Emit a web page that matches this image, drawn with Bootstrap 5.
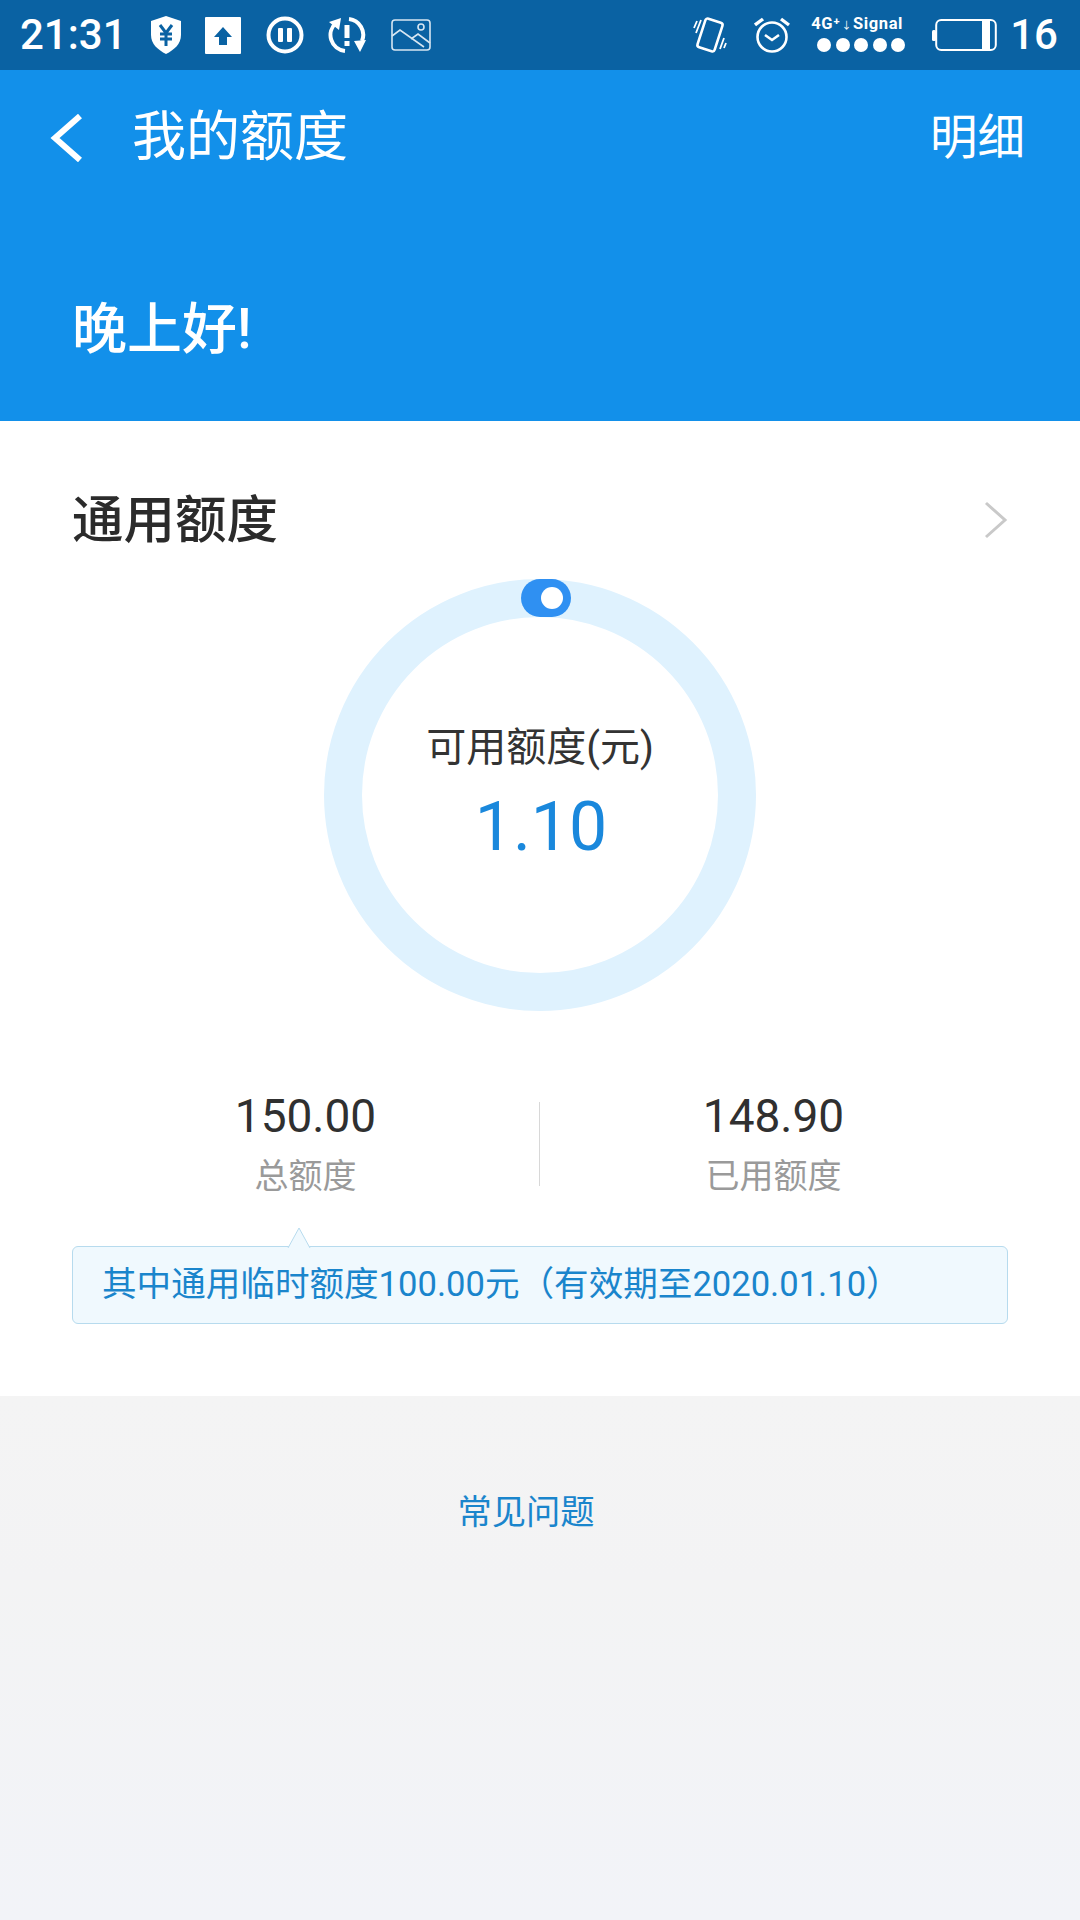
<!DOCTYPE html>
<html lang="zh">
<head>
<meta charset="UTF-8">
<meta name="viewport" content="width=device-width, initial-scale=1.0">
<title>我的额度</title>
<link href="https://cdn.jsdelivr.net/npm/bootstrap@5.3.0/dist/css/bootstrap.min.css" rel="stylesheet">
<style>
body { font-family: Roboto, "Noto Sans CJK SC", sans-serif; background: #fff; color: #303030; width: 1080px; }
.page-wrap { min-height: 1920px; }
.status-bar { height: 70px; background: #0a62a3; color: #fff; padding: 0 22px 0 20px; }
.status-time { font-size: 42px; font-weight: 500; line-height: 1; width: 129px; }
.status-num { font-size: 42px; font-weight: 500; line-height: 1; margin-left: 13px; }
.signal-box { width: 96px; margin: -2px 25px 0 21px; }
.signal-text { font-size: 16.5px; font-weight: 700; line-height: 16px; letter-spacing: .6px; white-space: nowrap; }
.signal-text small { font-size: 10px; font-weight: 400; margin: 0 1px; }
.signal-dots { gap: 4.5px; margin: 4px 0 0 6px; }
.signal-dots span { width: 14px; height: 14px; background: #fff; border-radius: 50%; }
.head-blue { height: 351px; background: #1290ea; color: #fff; }
.top-row { height: 135px; padding: 0 55px 0 50px; }
.top-title { font-size: 54px; margin-left: 50px; line-height: 1; }
.top-link { font-size: 47.5px; line-height: 1; padding-top: 3px; }
.greet { font-size: 55px; font-weight: 500; padding: 94px 0 0 72px; line-height: 1.1; }
.quota-card { height: 975px; padding: 0 72px; }
.quota-head { padding-top: 74px; height: 158px; }
.quota-title { font-size: 51.5px; font-weight: 500; line-height: 1; color: #2b2b2b; }
.quota-arrow { margin-top: 6px; }
.ring-box { width: 432px; height: 432px; border: 38px solid #dff2fe; border-radius: 50%; margin: 0 auto; }
.ring-knob { position: absolute; top: -38px; left: 159px; width: 50px; height: 38px; background: #2f90f2; border-radius: 19px; }
.ring-knob::after { content: ""; position: absolute; left: 20px; top: 8px; width: 22px; height: 22px; border-radius: 50%; background: #fff; }
.ring-label { font-size: 40px; line-height: 1; color: #333; margin-top: -2px; }
.ring-value { font-size: 68px; line-height: 1; color: #1a88dc; margin-top: 25px; padding-left: 2px; }
.stats-row { margin-top: 87px; height: 90px; }
.stats-cell { width: 467px; }
.stats-gap { width: 1px; height: 84px; background: #d8d8d8; margin-top: 2px; }
.stats-num { font-size: 46px; line-height: 1; color: #303030; }
.stats-label { font-size: 34px; line-height: 1; color: #9a9a9a; margin-top: 20px; }
.tip-box { height: 78px; margin-top: 58px; background: #f0f9fe; border: 1px solid #b7dbee; border-radius: 6px; padding-left: 29px; color: #1a85cc; font-size: 34.6px; white-space: nowrap; }
.tip-arrow { position: absolute; left: 214px; top: -20px; display: block; }
.gray-area { height: 524px; background: linear-gradient(#f4f4f4, #f3f3f4 35%, #f2f3f8); padding: 99px 28px 0 0; }
.faq-link { font-size: 34.3px; line-height: 1; color: #1a85cc; text-decoration: none; }
</style>
</head>
<body class="m-0">
<div class="page-wrap d-flex flex-column">

  <div class="status-bar d-flex align-items-center">
    <div class="status-time">21:31</div>
    <svg width="34" height="40" viewBox="0 0 34 40"><path d="M17 1 L32 6 V20 C32 29 25 35 17 39 C9 35 2 29 2 20 V6 Z" fill="#fff"/><path d="M11 10 L17 18 L23 10 M11 19 H23 M11 24 H23 M17 18 V31" fill="none" stroke="#0a62a3" stroke-width="3"/></svg>
    <svg width="36" height="37" viewBox="0 0 36 37" style="margin-left:22px"><rect width="36" height="37" rx="1" fill="#fff"/><path d="M18 10 L27 20 H22 V28 H14 V20 H9 Z" fill="#0a62a3"/></svg>
    <svg width="38" height="38" viewBox="0 0 38 38" style="margin-left:25px"><circle cx="19" cy="19" r="16.5" fill="none" stroke="#fff" stroke-width="4"/><rect x="12" y="12" width="5" height="14" rx="1" fill="#fff"/><rect x="21" y="12" width="5" height="14" rx="1" fill="#fff"/></svg>
    <svg width="40" height="40" viewBox="0 0 40 40" style="margin-left:23px"><path d="M9 8 A16 16 0 0 0 18 36 M22 4 A16 16 0 0 1 35 26" fill="none" stroke="#fff" stroke-width="4"/><path d="M2 7 L14 3 L12 15 Z M27 26 L39 25 L33 37 Z" fill="#fff"/><rect x="17.5" y="10" width="5" height="13" fill="#fff"/><rect x="17.5" y="26" width="5" height="5" fill="#fff"/></svg>
    <svg width="40" height="32" viewBox="0 0 40 32" style="margin-left:24px"><rect x="1" y="1" width="38" height="30" rx="3" fill="none" stroke="#d7e6f2" stroke-width="1.6"/><path d="M1 17 L9 11 L33 28 M20 20 L27 15 L39 24" fill="none" stroke="#d7e6f2" stroke-width="1.6"/><circle cx="30" cy="8" r="3" fill="none" stroke="#d7e6f2" stroke-width="1.6"/></svg>

    <svg width="34" height="38" viewBox="0 0 34 38" class="ms-auto"><rect x="8" y="4" width="18" height="30" rx="2.5" transform="rotate(18 17 19)" fill="none" stroke="#fff" stroke-width="2.6"/><path d="M4 5 L1 12 M8 4 L3 17 M31 22 L27 33 M33 27 L31 32" stroke="#fff" stroke-width="1.8" fill="none"/></svg>
    <svg width="36" height="38" viewBox="0 0 36 38" style="margin-left:27px"><circle cx="18" cy="21" r="14.5" fill="none" stroke="#fff" stroke-width="2.6"/><path d="M11 19 L18 24 L25 19" fill="none" stroke="#fff" stroke-width="2.6"/><path d="M1 9 L9 3 M35 9 L27 3" stroke="#fff" stroke-width="3.4"/></svg>
    <div class="signal-box">
      <div class="signal-text">4G⁺<small>↓</small>Signal</div>
      <div class="signal-dots d-flex"><span></span><span></span><span></span><span></span><span></span></div>
    </div>
    <svg width="65" height="32" viewBox="0 0 65 32"><rect x="0" y="11" width="4" height="11" rx="1.5" fill="#fff"/><rect x="4.2" y="1" width="59.6" height="30" rx="5" fill="none" stroke="#fff" stroke-width="2"/><rect x="50" y="2" width="8" height="28" fill="#fff"/></svg>
    <div class="status-num">16</div>
  </div>

  <div class="head-blue">
    <div class="top-row d-flex align-items-center">
      <svg width="32" height="48" viewBox="0 0 32 48"><path d="M30 2 L5 24 L30 46" fill="none" stroke="#fff" stroke-width="6"/></svg>
      <div class="top-title">我的额度</div>
      <a class="top-link ms-auto text-white text-decoration-none">明细</a>
    </div>
    <div class="greet">晚上好!</div>
  </div>

  <div class="quota-card bg-white">
    <div class="quota-head d-flex justify-content-between">
      <div class="quota-title">通用额度</div>
      <svg width="24" height="38" viewBox="0 0 24 38" class="quota-arrow"><path d="M2 2 L21 19 L2 36" fill="none" stroke="#c9c9c9" stroke-width="3"/></svg>
    </div>
    <div class="ring-box position-relative d-flex flex-column align-items-center justify-content-center">
      <div class="ring-knob"></div>
      <div class="ring-label">可用额度(元)</div>
      <div class="ring-value">1.10</div>
    </div>
    <div class="stats-row d-flex align-items-center">
      <div class="stats-cell text-center">
        <div class="stats-num">150.00</div>
        <div class="stats-label">总额度</div>
      </div>
      <div class="stats-gap"></div>
      <div class="stats-cell text-center">
        <div class="stats-num">148.90</div>
        <div class="stats-label">已用额度</div>
      </div>
    </div>
    <div class="tip-box position-relative d-flex align-items-center">
      <svg class="tip-arrow" width="24" height="21" viewBox="0 0 24 21"><path d="M1 21 L12 1 L23 21" fill="#f0f9fe" stroke="#b7dbee" stroke-width="1"/></svg>
      其中通用临时额度100.00元（有效期至2020.01.10）
    </div>
  </div>

  <div class="gray-area text-center">
    <a class="faq-link">常见问题</a>
  </div>
</div>
<script src="https://cdn.jsdelivr.net/npm/bootstrap@5.3.0/dist/js/bootstrap.bundle.min.js"></script>
</body>
</html>
